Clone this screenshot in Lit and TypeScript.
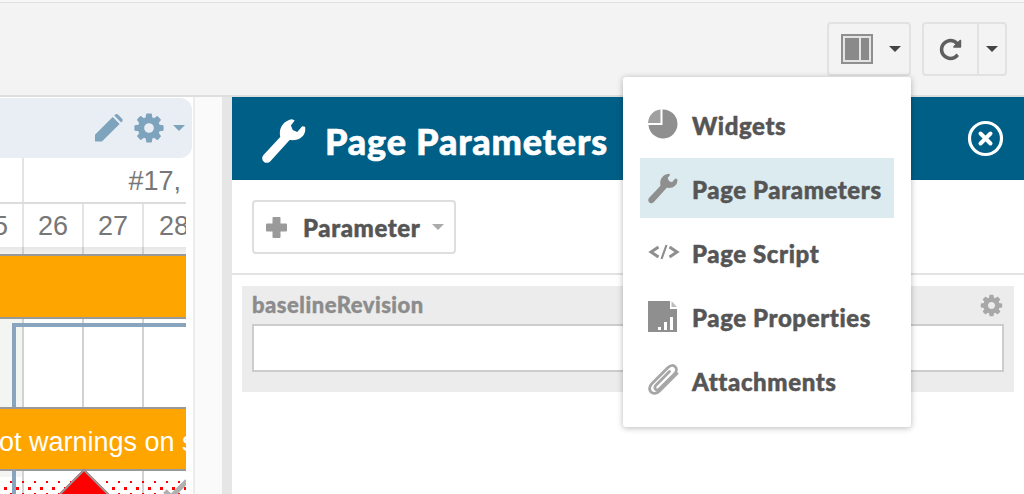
import { LitElement, css, html, svg } from 'lit';
import { customElement } from 'lit/decorators.js';

const GEAR =
  'M1152 896q0-106-75-181t-181-75-181 75-75 181 75 181 181 75 181-75 75-181zm512-109v222q0 12-8 23t-20 13l-185 28q-19 54-39 91 35 50 107 138 10 12 10 25t-9 23q-27 37-99 108t-94 71q-12 0-26-9l-138-108q-44 23-91 38-16 136-29 186-7 28-36 28h-222q-14 0-24.5-8.5t-11.5-21.5l-28-184q-49-16-90-37l-141 107q-10 9-25 9-14 0-25-11-126-114-165-168-7-10-7-23 0-12 8-23 15-21 51-66.5t54-70.5q-27-50-41-99l-183-27q-13-2-21-12.5t-8-23.5v-222q0-12 8-23t19-13l186-28q14-46 39-92-40-57-107-138-10-12-10-24 0-10 9-23 26-36 98.5-107.5t94.5-71.5q13 0 26 10l138 107q44-23 91-38 16-136 29-186 7-28 36-28h222q14 0 24.5 8.5t11.5 21.5l28 184q49 16 90 37l142-107q9-9 24-9 13 0 25 10 129 119 165 170 7 8 7 22 0 12-8 23-15 21-51 66.5t-54 70.5q26 50 41 98l183 28q13 2 21 12.5t8 23.5z';
const REPEAT =
  'M1664 256v448q0 26-19 45t-45 19h-448q-42 0-59-40-17-39 14-69l138-138q-148-137-349-137-104 0-198.5 40.5t-163.5 109.5-109.5 163.5-40.5 198.5 40.5 198.5 109.5 163.5 163.5 109.5 198.5 40.5q119 0 225-52t179-147q7-10 23-12 15 0 25 9l137 138q9 8 9.5 20.5t-7.5 22.5q-109 132-264 204.5t-327 72.5q-156 0-298-61t-245-164-164-245-61-298 61-298 164-245 245-164 298-61q147 0 284.5 55.5t244.5 156.5l130-129q29-31 70-14 39 17 39 59z';

const fa = (d: string, size: number, color: string) => html`
  <svg width=${size} height=${size} viewBox="0 0 1792 1792" fill=${color}>${svg`<path d=${d}></path>`}</svg>
`;

const wrench = (w: number, h: number, color: string) => html`
  <svg width=${w} height=${h} viewBox="0 0 140 146" fill=${color}>
    <path d="M4 118L58 60C52 32 68 8 96 4L104 8L92 24L98 38L112 44L128 26L137 28C142 52 122 74 88 70L26 138C18 146 6 142 2 134C0 128 0 124 4 118Z"></path>
  </svg>
`;

const caret = (color: string) => html`
  <svg width="12" height="6" viewBox="0 0 12 6" fill=${color}><path d="M0 0h12L6 6z"></path></svg>
`;

const pieIcon = html`
  <svg width="30" height="30" viewBox="0 0 30 30" fill="#8f8f8f">
    <path d="M14.500 0.500A14.500 14.500 0 1 1 0.500 16H14.500z"></path>
    <path d="M12.500 0.500V14H0C0.500 6.500 5.500 1 12.500 0.500z" fill="#a0a0a0"></path>
  </svg>
`;

const codeIcon = html`
  <svg width="32" height="16" viewBox="0 0 32 16" fill="none" stroke="#8f8f8f" stroke-width="3">
    <path d="M10.500 3L3 8l7.500 5M21.500 3L29 8l-7.500 5"></path>
    <path d="M18.500 1l-5 14" stroke-width="2.200"></path>
  </svg>
`;

const fileIcon = html`
  <svg width="29" height="31" viewBox="0 0 29 31">
    <path d="M0 0h22v8h7v23H0z" fill="#8f8f8f"></path>
    <path d="M23.500 0l5.500 6h-5.500z" fill="#bdbdbd"></path>
    <path d="M10 26h3v3h-3zM16 21h3v8h-3zM22 16h3v13h-3z" fill="#fff"></path>
  </svg>
`;

const clipIcon = html`
  <svg width="32" height="32" viewBox="0 0 32 32" fill="none" stroke="#a6a6a6" stroke-width="2.800" stroke-linecap="round">
    <path d="M29 9.500L11.500 27c-3 3-6.500 3-8.500 1s-2-5.500 1-8.500L20 3.500c2.500-2.500 5.500-2.500 7.200-.8s1.700 4.700-.8 7.200L11.500 24.800c-1.300 1.300-3 1.400-4 .4s-.9-2.700.4-4L21.500 7.500"></path>
  </svg>
`;

const closeIcon = html`
  <svg width="37" height="37" viewBox="0 0 37 37" fill="none" stroke="#fff" stroke-linecap="round">
    <circle cx="18.500" cy="18.500" r="16" stroke-width="3.200"></circle>
    <path d="M13.500 13.500l10 10M23.500 13.500l-10 10" stroke-width="4"></path>
  </svg>
`;

const plusIcon = html`
  <svg width="21" height="21" viewBox="0 0 21 21" fill="#9a9a9a">
    <path d="M6.500 1a1 1 0 0 1 1-1h6a1 1 0 0 1 1 1v5.500H20a1 1 0 0 1 1 1v6a1 1 0 0 1-1 1h-5.500V20a1 1 0 0 1-1 1h-6a1 1 0 0 1-1-1v-5.500H1a1 1 0 0 1-1-1v-6a1 1 0 0 1 1-1h5.500z"></path>
  </svg>
`;

const pencilIcon = html`
  <svg width="28" height="28" viewBox="0 0 28 28" fill="#7da3bd">
    <path d="M0 27.500v-6.700L17.700 3.100l6.900 6.900L6.900 27.500zM19.300 1.600l1-1c.8-.8 1.800-.8 2.600 0l4.200 4.200c.8.800.8 1.800 0 2.600l-1 1z"></path>
  </svg>
`;

const layoutIcon = html`
  <svg width="32" height="30" viewBox="0 0 32 30">
    <path d="M0 0h32v30H0z" fill="#8f8f8f"></path>
    <path d="M2 2h28v26H2z" fill="#e4e4e4"></path>
    <path d="M4 4h14v22H4zM20 4h8v22h-8z" fill="#8a8a8a"></path>
  </svg>
`;

const MENU = [
  { icon: pieIcon, label: 'Widgets', active: false },
  { icon: wrench(30, 31, '#8f8f8f'), label: 'Page Parameters', active: true },
  { icon: codeIcon, label: 'Page Script', active: false },
  { icon: fileIcon, label: 'Page Properties', active: false },
  { icon: clipIcon, label: 'Attachments', active: false },
];

@customElement('app-root')
export class AppRoot extends LitElement {
  render() {
    return html`
      <div class="toolbar">
        <div class="tool-btn layout">
          ${layoutIcon} ${caret('#444')}
        </div>
        <div class="tool-btn refresh">
          <span class="refresh-main">${fa(REPEAT, 25, '#5e5e5e')}</span>
          <span class="refresh-caret">${caret('#444')}</span>
        </div>
        <div class="menu">
          ${MENU.map(
            (item) => html`
              <div class="menu-item ${item.active ? 'active' : ''}">
                <span class="menu-icon">${item.icon}</span>
                <span>${item.label}</span>
              </div>
            `,
          )}
        </div>
      </div>
      <div class="main">
        <div class="left">
          <div class="gantt-head">
            ${pencilIcon} ${fa(GEAR, 34, '#7da3bd')}
            <span class="head-caret">${caret('#7da3bd')}</span>
          </div>
          <div class="chart">
            <div class="row week">
              <div class="week-stub"></div>
              <div class="week-cell">#17,</div>
            </div>
            <div class="row days">
              <div class="day">25</div>
              <div class="day">26</div>
              <div class="day">27</div>
              <div class="day last">28</div>
            </div>
            <div class="row shade">
              <div class="shade-cell"></div>
              <div class="shade-cell"></div>
              <div class="shade-cell"></div>
              <div class="shade-cell last"></div>
            </div>
            <div class="bar plain"></div>
            <div class="row grid">
              <div class="cell first"></div>
              <div class="cell"></div>
              <div class="cell"></div>
              <div class="cell last"></div>
              <div class="frame"></div>
            </div>
            <div class="bar">ot warnings on s</div>
            <div class="row dots">
              <svg class="dot-bg" width="240" height="30">
                <defs>
                  <pattern id="dots" width="12" height="12" patternUnits="userSpaceOnUse">
                    <rect x="4" y="4" width="3" height="3" fill="#f00"></rect>
                    <rect x="10" y="10" width="3" height="3" fill="#f00"></rect>
                  </pattern>
                </defs>
                <rect y="8" width="240" height="22" fill="url(#dots)"></rect>
                <rect width="58" height="6" fill="#f3f5f3"></rect>
              </svg>
              <div class="cell"></div>
              <div class="cell"></div>
              <div class="cell"></div>
              <div class="cell last"></div>
              <div class="frame-line"></div>
              <div class="diamond"></div>
              <svg class="check" width="24" height="24" viewBox="0 0 24 24" fill="none" stroke="#b0b0b0" stroke-width="5">
                <path d="M2 14l6 6L24 4"></path>
              </svg>
            </div>
          </div>
        </div>
        <div class="gutter"></div>
        <div class="panel">
          <div class="panel-head">
            <span class="head-icon">${wrench(44, 48, '#fff')}</span>
            <h1>Page Parameters</h1>
            <span class="spacer"></span>
            ${closeIcon}
          </div>
          <div class="panel-tools">
            <div class="add-btn">
              ${plusIcon}
              <span class="add-label">Parameter</span>
              ${caret('#aaa')}
            </div>
          </div>
          <div class="param">
            <div class="param-top">
              <span class="param-name">baselineRevision</span>
              ${fa(GEAR, 25, '#a8a8a8')}
            </div>
            <div class="param-input"></div>
          </div>
        </div>
      </div>
    `;
  }

  static styles = css`
    :host {
      display: block;
      width: 1024px;
      height: 494px;
      overflow: hidden;
      background: #fff;
      font-family: Lato, 'Liberation Sans', sans-serif;
      font-weight: 900;
    }

    svg {
      display: block;
      flex: none;
    }

    .toolbar {
      position: relative;
      box-sizing: border-box;
      height: 97px;
      display: flex;
      justify-content: flex-end;
      align-items: flex-start;
      gap: 11px;
      padding: 22px 17px 0 0;
      background: #f3f3f3;
      box-shadow: inset 0 2px 0 #f6f6f6, inset 0 3px 0 #e2e0e4;
      border-bottom: 2px solid #dedede;
    }

    .tool-btn {
      box-sizing: border-box;
      height: 54px;
      display: flex;
      align-items: center;
      border: 2px solid #e2e2e2;
      border-radius: 4px;
    }

    .layout {
      width: 84px;
      gap: 16px;
      padding-left: 12px;
    }

    .refresh {
      width: 85px;
    }

    .refresh-main {
      width: 53px;
      height: 50px;
      display: flex;
      align-items: center;
      justify-content: center;
      border-right: 2px solid #e2e2e2;
    }

    .refresh-caret {
      flex: 1;
      display: flex;
      justify-content: center;
    }

    .menu {
      position: absolute;
      top: 77px;
      left: 623px;
      z-index: 5;
      box-sizing: border-box;
      width: 288px;
      height: 350px;
      padding: 17px 17px 0;
      display: flex;
      flex-direction: column;
      gap: 4px;
      background: #fff;
      border-radius: 3px;
      box-shadow: 0 1px 6px rgba(0, 0, 0, 0.28);
    }

    .menu-item {
      box-sizing: border-box;
      height: 60px;
      padding-top: 2px;
      display: flex;
      align-items: center;
      font-size: 24px;
      letter-spacing: 0.6px;
      -webkit-text-stroke: 0.5px #555;
      color: #555;
    }

    .menu-item.active {
      background: #dcebef;
    }

    .menu-icon {
      box-sizing: border-box;
      width: 52px;
      padding-left: 8px;
      margin-top: -2px;
    }

    .main {
      height: 397px;
      display: flex;
    }

    .left {
      width: 195px;
      flex: none;
      padding-top: 1px;
      border-right: 2px solid #ececec;
      box-sizing: border-box;
      overflow: hidden;
    }

    .gantt-head {
      box-sizing: border-box;
      width: 192px;
      height: 60px;
      display: flex;
      align-items: center;
      justify-content: flex-end;
      gap: 9px;
      padding-right: 7px;
      background: #e8eef3;
      border-radius: 0 12px 12px 0;
    }

    .head-caret {
      margin-left: -2px;
    }

    .chart {
      width: 186px;
      overflow: hidden;
      font-family: 'Liberation Sans', Arial, sans-serif;
      font-weight: 400;
    }

    .row {
      position: relative;
      display: flex;
    }

    .week {
      height: 44px;
      border-bottom: 2px solid #dcdcdc;
    }

    .week-stub {
      width: 22px;
    }

    .week-cell {
      flex: 1;
      box-sizing: border-box;
      padding: 8px 5px 0 0;
      border-left: 2px solid #e4e4e4;
      text-align: right;
      font-size: 27px;
      line-height: 30px;
      color: #777;
    }

    .days {
      height: 43px;
      margin-left: -36px;
    }

    .day {
      box-sizing: border-box;
      width: 60px;
      flex: none;
      border-right: 2px solid #e4e4e4;
      text-align: center;
      font-size: 27px;
      line-height: 44px;
      color: #777;
    }

    .day.last {
      border-right: none;
    }

    .shade {
      height: 7px;
      margin-left: -36px;
      background: linear-gradient(#e6e6e6, #f2f2f2);
      border-bottom: 2px solid #999;
    }

    .shade-cell {
      box-sizing: border-box;
      width: 60px;
      flex: none;
      border-right: 2px solid #cfcfcf;
    }

    .bar {
      box-sizing: border-box;
      height: 62px;
      background: #ffa500;
      border-bottom: 2px solid #999;
      color: #fff;
      font-size: 27px;
      line-height: 66px;
      text-indent: -1px;
      white-space: nowrap;
      overflow: hidden;
    }

    .bar.plain {
      height: 63px;
    }

    .grid {
      height: 88px;
      margin-left: -36px;
      border-bottom: 2px solid #999;
    }

    .cell {
      box-sizing: border-box;
      width: 60px;
      flex: none;
      border-right: 2px solid #d2d2d2;
    }

    .cell.first {
      background: #f3f5f3;
    }

    .frame {
      position: absolute;
      top: 4px;
      left: 48px;
      width: 220px;
      height: calc(100% - 4px);
      box-sizing: border-box;
      border-top: 4px solid #88a5bd;
      border-left: 4px solid #88a5bd;
    }

    .dots {
      height: 30px;
      margin-left: -36px;
      background: #fff;
    }

    .dot-bg {
      position: absolute;
      top: 0;
      left: 0;
    }

    .frame-line {
      position: absolute;
      top: 0;
      left: 48px;
      width: 4px;
      height: 100%;
      background: #88a5bd;
    }

    .diamond {
      position: absolute;
      top: 6px;
      left: 100px;
      width: 40px;
      height: 40px;
      box-sizing: border-box;
      background: #f00;
      border: 2px solid #999;
      transform: rotate(45deg);
    }

    .check {
      position: absolute;
      top: 6px;
      left: 199px;
    }

    .gutter {
      width: 37px;
      flex: none;
      box-sizing: border-box;
      background: #fafafa;
      border-right: 10px solid #e6e6e6;
    }

    .panel {
      flex: 1;
      min-width: 0;
    }

    .panel-head {
      box-sizing: border-box;
      height: 83px;
      display: flex;
      align-items: center;
      padding: 0 20px 0 30px;
      background: #005f87;
      color: #fff;
    }

    .head-icon {
      margin: 4px 19px 0 0;
    }

    h1 {
      margin: 4px 0 0;
      font-size: 36px;
      font-weight: 900;
      letter-spacing: 0.8px;
      -webkit-text-stroke: 0.6px #fff;
    }

    .spacer {
      flex: 1;
    }

    .panel-tools {
      box-sizing: border-box;
      height: 95px;
      padding: 20px;
      border-bottom: 2px solid #e3e3e3;
    }

    .add-btn {
      box-sizing: border-box;
      width: 204px;
      height: 54px;
      display: flex;
      align-items: center;
      padding-left: 12px;
      background: #fff;
      border: 2px solid #dedede;
      border-radius: 4px;
      color: #555;
      font-size: 24px;
      letter-spacing: 0.6px;
      -webkit-text-stroke: 0.5px #555;
    }

    .add-label {
      margin: 0 12px 0 16px;
    }

    .param {
      box-sizing: border-box;
      height: 106px;
      margin: 11px 10px 0;
      padding: 0 10px;
      background: #ececec;
    }

    .param-top {
      height: 38px;
      display: flex;
      align-items: center;
      justify-content: space-between;
      color: #8c8c8c;
      font-size: 22px;
      letter-spacing: 0.5px;
      -webkit-text-stroke: 0.4px #8c8c8c;
    }

    .param-name {
      margin-top: -2px;
    }

    .param-input {
      box-sizing: border-box;
      height: 48px;
      background: #fff;
      border: 2px solid #ccc;
    }
  `;
}

declare global {
  interface HTMLElementTagNameMap {
    'app-root': AppRoot;
  }
}
